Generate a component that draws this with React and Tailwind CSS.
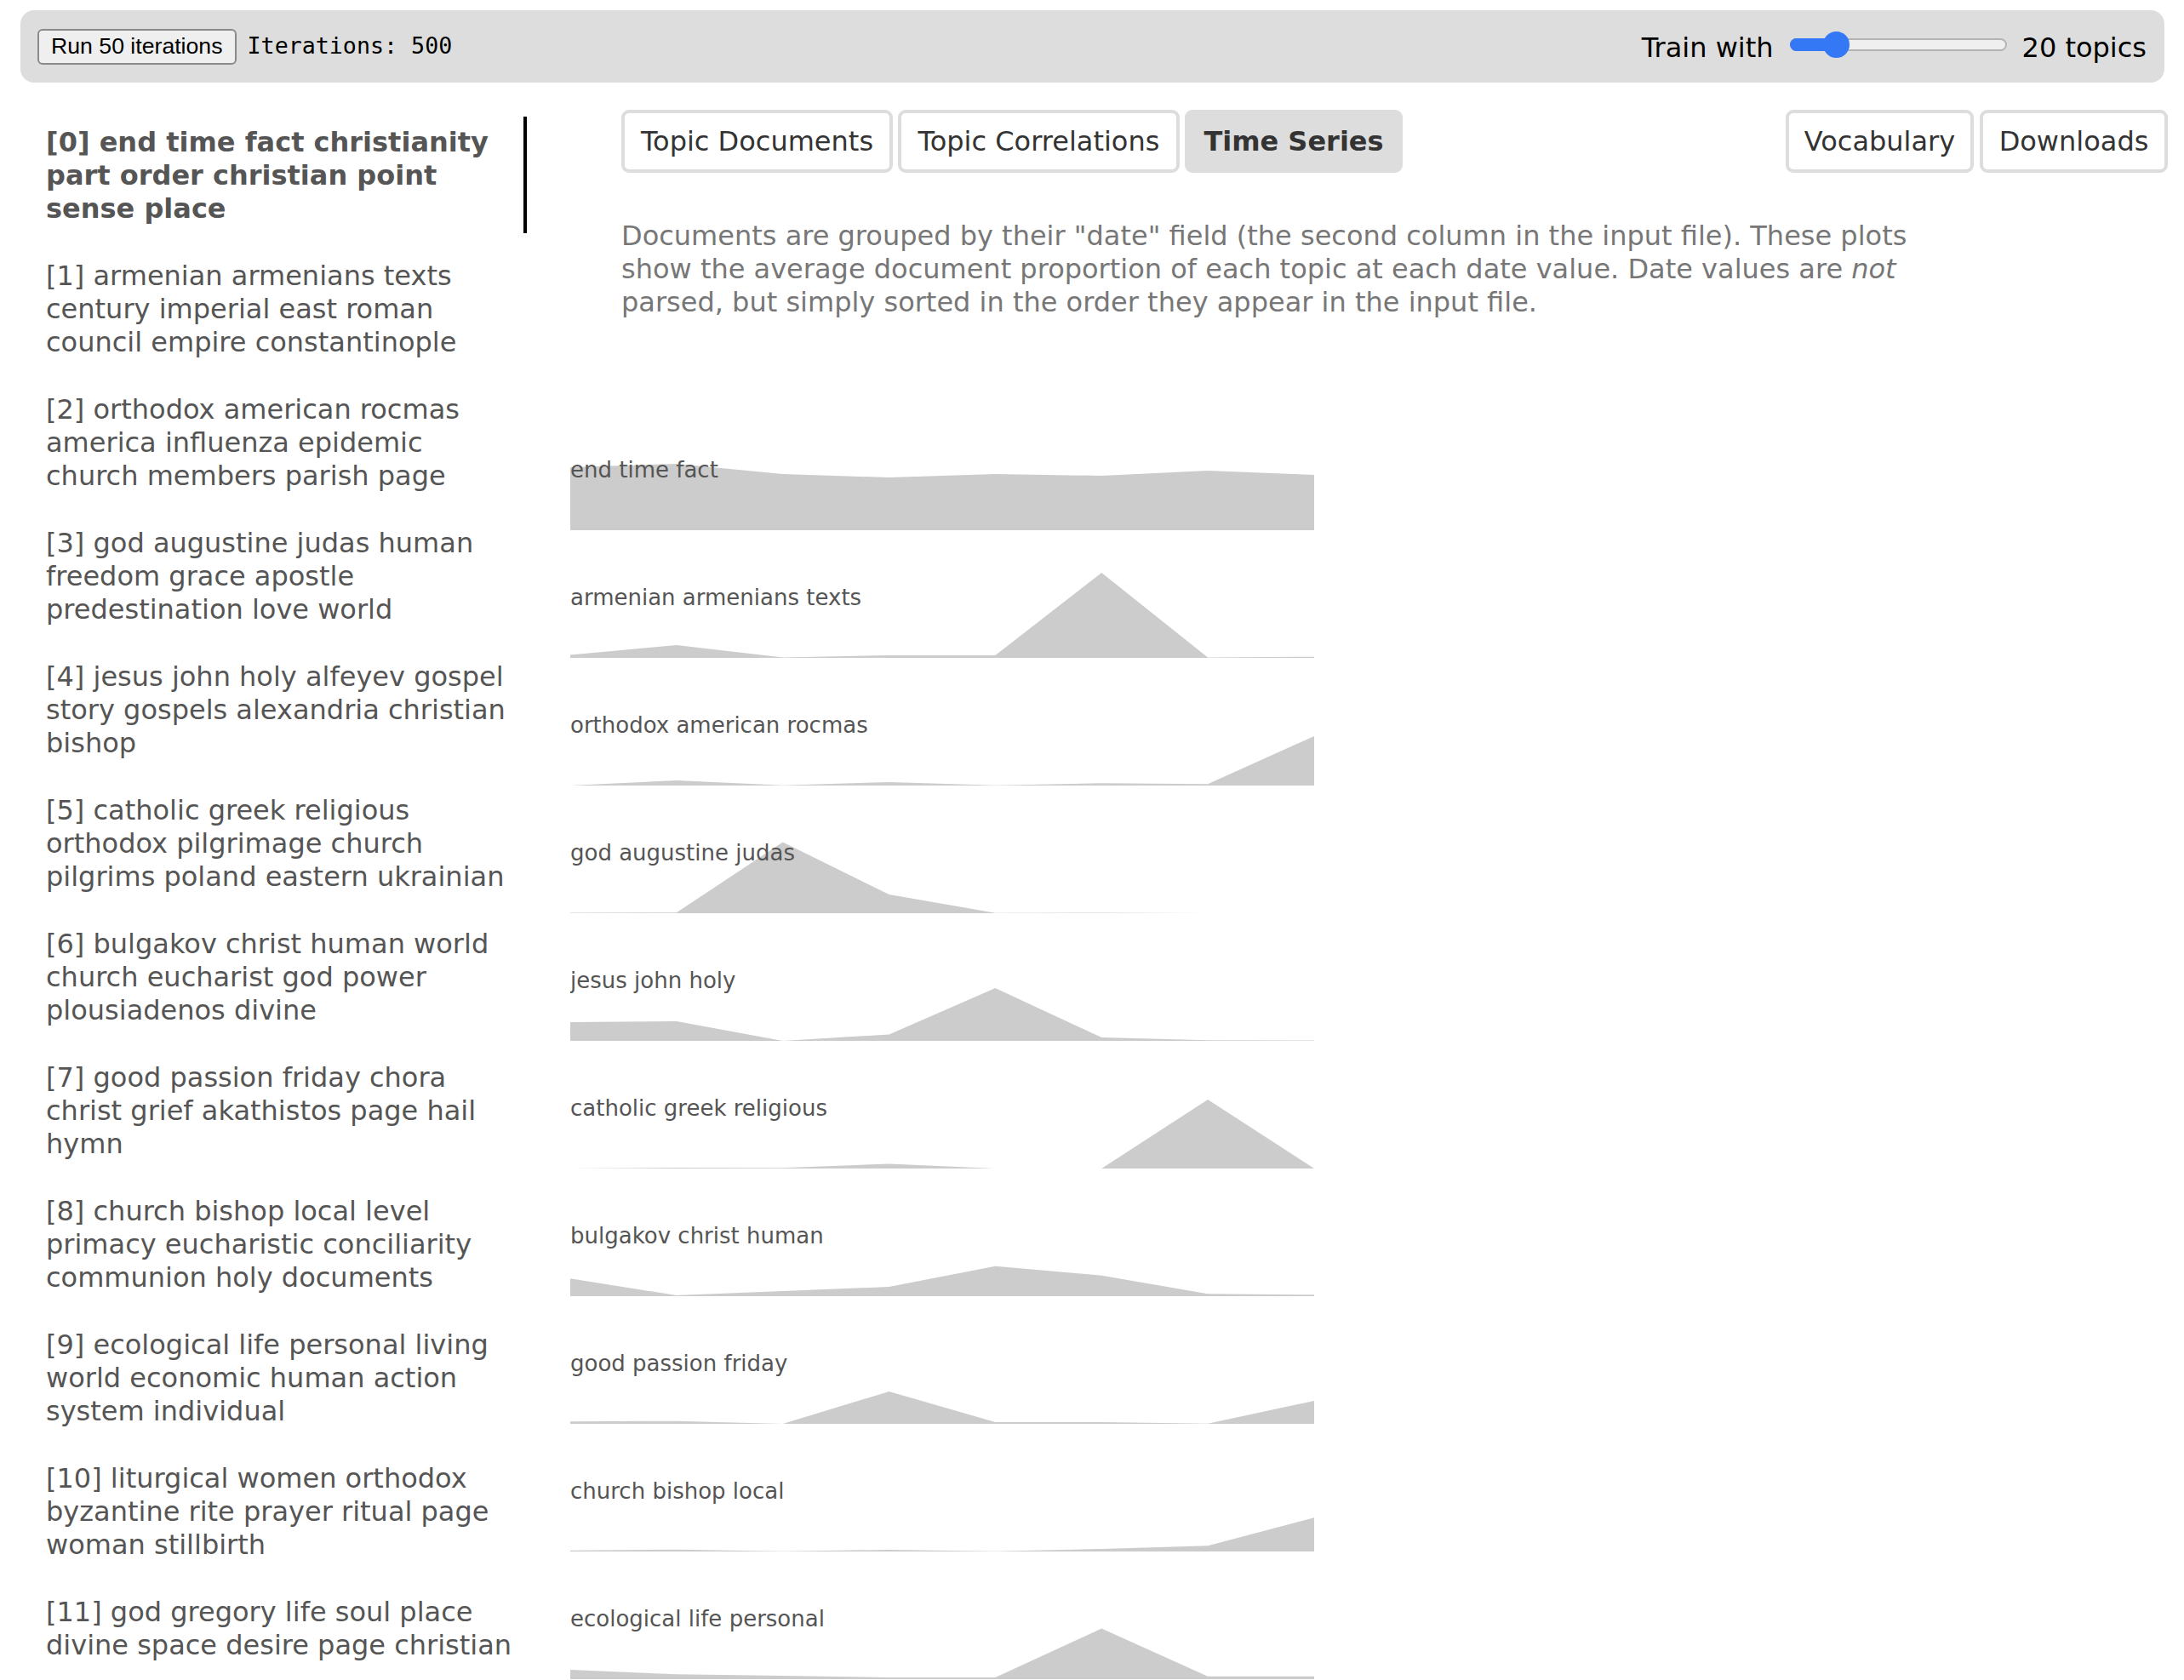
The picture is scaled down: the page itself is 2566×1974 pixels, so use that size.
import React from "react";

const topics = [
  { lines: ["[0] end time fact christianity", "part order christian point", "sense place"], selected: true },
  { lines: ["[1] armenian armenians texts", "century imperial east roman", "council empire constantinople"] },
  { lines: ["[2] orthodox american rocmas", "america influenza epidemic", "church members parish page"] },
  { lines: ["[3] god augustine judas human", "freedom grace apostle", "predestination love world"] },
  { lines: ["[4] jesus john holy alfeyev gospel", "story gospels alexandria christian", "bishop"] },
  { lines: ["[5] catholic greek religious", "orthodox pilgrimage church", "pilgrims poland eastern ukrainian"] },
  { lines: ["[6] bulgakov christ human world", "church eucharist god power", "plousiadenos divine"] },
  { lines: ["[7] good passion friday chora", "christ grief akathistos page hail", "hymn"] },
  { lines: ["[8] church bishop local level", "primacy eucharistic conciliarity", "communion holy documents"] },
  { lines: ["[9] ecological life personal living", "world economic human action", "system individual"] },
  { lines: ["[10] liturgical women orthodox", "byzantine rite prayer ritual page", "woman stillbirth"] },
  { lines: ["[11] god gregory life soul place", "divine space desire page christian"] },
];

const charts = [
  { label: "end time fact", h: [74, 78, 66, 62, 66, 64, 70, 65] },
  { label: "armenian armenians texts", h: [3.5, 15, 0.5, 3, 3, 100, 0.5, 1.3] },
  { label: "orthodox american rocmas", h: [0, 6, 0.3, 4, 0.3, 2.7, 1.7, 58] },
  { label: "god augustine judas", h: [0.6, 0.8, 83.5, 22, 0.2, 0.5, 0, 0] },
  { label: "jesus john holy", h: [22, 23, 0, 7.5, 62, 4, 0.7, 0.5] },
  { label: "catholic greek religious", h: [0, 1, 0.8, 5.5, 0, 0, 81, 0] },
  { label: "bulgakov christ human", h: [20.7, 1, 6, 11, 35.3, 24.3, 2.7, 1.7] },
  { label: "good passion friday", h: [2.7, 3.3, 0, 38, 2, 2, 0.3, 27] },
  { label: "church bishop local", h: [1.3, 2.3, 0.3, 2, 0.3, 3, 6.7, 39.7] },
  { label: "ecological life personal", h: [11, 5.7, 4, 2, 2, 59.4, 3.3, 3.3] },
];

const W = 874;
const BOTTOM = 140;
const STEP = W / 7;

function Chart({ label, h }) {
  const pts = [`0,${BOTTOM}`];
  h.forEach((v, i) => pts.push(`${(i * STEP).toFixed(1)},${(BOTTOM - v).toFixed(1)}`));
  pts.push(`${W},${BOTTOM}`);
  return (
    <svg width={W} height={150} className="block">
      <polygon points={pts.join(" ")} fill="#cccccc" />
      <text x={0} y={78} fontSize={26} fill="#555555" fontFamily="'DejaVu Sans', sans-serif">
        {label}
      </text>
    </svg>
  );
}

function Tab({ children, active, w }) {
  return (
    <div
      className={
        "h-[74px] flex items-center justify-center rounded-[9px] border-[4px] text-[32px] leading-[38px] text-[#333333] whitespace-nowrap " +
        w +
        " " +
        (active ? "bg-[#dddddd] border-[#dddddd] font-bold" : "bg-white border-[#dddddd]")
      }
    >
      {children}
    </div>
  );
}

export default function App() {
  return (
    <div
      className="min-h-screen bg-white pt-[12px] pl-[24px] pr-[23px] text-black"
      style={{ fontFamily: "'DejaVu Sans', Verdana, sans-serif" }}
    >
      {/* Header */}
      <div className="h-[85px] rounded-[16px] bg-[#dddddd] flex items-center justify-between pl-[20px] pr-[21px]">
        <div className="flex items-center">
          <button
            className="h-[42px] px-[14px] border-[2px] border-[#8a8a8a] rounded-[6px] bg-[#efefef] text-[26.67px] text-black leading-none"
            style={{ fontFamily: "'Liberation Sans', Arial, sans-serif" }}
          >
            Run 50 iterations
          </button>
          <span
            className="ml-[13px] text-[26.67px] text-black mt-[-2px]"
            style={{ fontFamily: "'DejaVu Sans Mono', monospace" }}
          >
            Iterations: 500
          </span>
        </div>
        <div className="flex items-center">
          <span className="text-[32px] leading-[39px] mt-[4px]">Train with</span>
          <div className="relative ml-[19px] mb-[5px] w-[255px] h-[15px]">
            <div className="absolute inset-0 rounded-full bg-[#efefef] border-[2px] border-[#b3b3b3]" />
            <div className="absolute left-0 top-0 h-[15px] w-[56px] rounded-full bg-[#3478f6]" />
            <div className="absolute left-[39px] top-[-8px] w-[31px] h-[31px] rounded-full bg-[#3478f6]" />
          </div>
          <span className="ml-[18px] text-[32px] leading-[39px] mt-[4px]">20 topics</span>
        </div>
      </div>

      <div className="flex">
        {/* Sidebar */}
        <div className="w-[595px] shrink-0 flex flex-col gap-[20px] pt-[40px]">
          {topics.map((t, i) => (
            <div
              key={i}
              className={
                "pt-[11px] pb-[9px] pl-[30px] pr-[10px] text-[32px] leading-[39px] text-[#555555] whitespace-nowrap " +
                (t.selected ? "font-bold border-r-[4px] border-black" : "")
              }
            >
              {t.lines.map((l, j) => (
                <React.Fragment key={j}>
                  {l}
                  {j < t.lines.length - 1 && <br />}
                </React.Fragment>
              ))}
            </div>
          ))}
        </div>

        {/* Main */}
        <div className="flex-1 min-w-0 pl-[51px] pt-[32px]">
          <div className="ml-[60px] -mr-[4px] flex justify-between">
            <div className="flex gap-[6px]">
              <Tab w="w-[319px]">Topic Documents</Tab>
              <Tab w="w-[331px]">Topic Correlations</Tab>
              <Tab w="w-[256px]" active>Time Series</Tab>
            </div>
            <div className="flex gap-[7px]">
              <Tab w="w-[221px]">Vocabulary</Tab>
              <Tab w="w-[221px]">Downloads</Tab>
            </div>
          </div>

          <div className="ml-[60px] mt-[55px] text-[32px] leading-[39px] text-[#777777] whitespace-nowrap">
            Documents are grouped by their "date" field (the second column in the input file). These plots
            <br />
            show the average document proportion of each topic at each date value. Date values are <em>not</em>
            <br />
            parsed, but simply sorted in the order they appear in the input file.
          </div>

          <div className="mt-[108px] flex flex-col">
            {charts.map((c, i) => (
              <Chart key={i} label={c.label} h={c.h} />
            ))}
          </div>
        </div>
      </div>
    </div>
  );
}
